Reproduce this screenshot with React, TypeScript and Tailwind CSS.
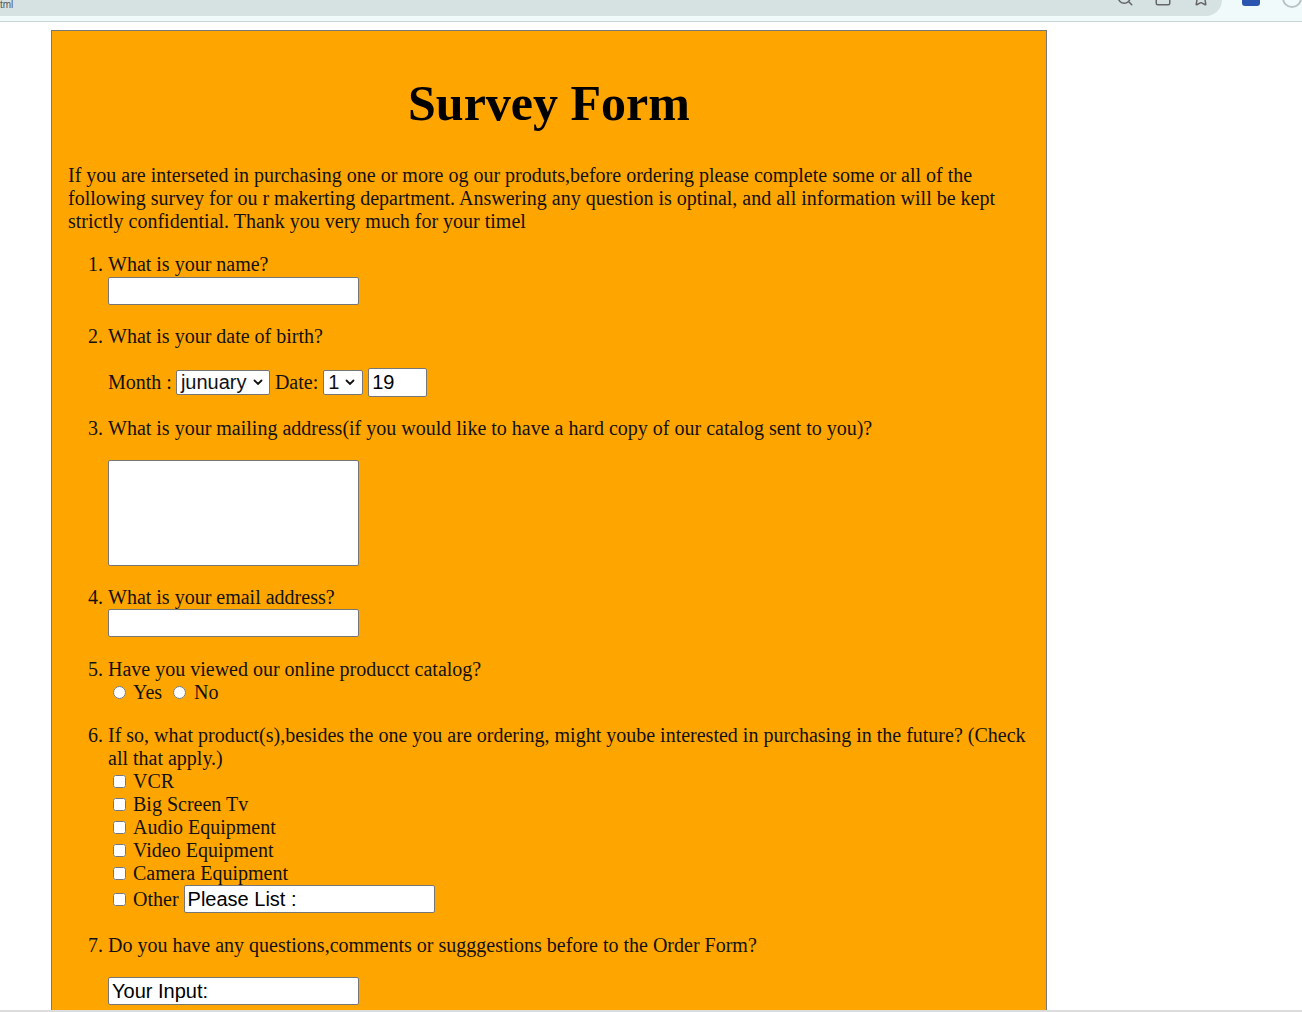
import { Search, Star, SquareArrowOutUpRight } from 'lucide-react';

const serif = { fontFamily: '"Liberation Serif", "Times New Roman", serif' };

const Chevron = () => (
  <svg width="10" height="7" viewBox="0 0 10 7" className="ml-[6px] shrink-0">
    <path d="M1.5 1.5 L5 5 L8.5 1.5" fill="none" stroke="#111" strokeWidth="1.8" strokeLinecap="round" />
  </svg>
);

const TextBox = ({ value = '', className = '' }: { value?: string; className?: string }) => (
  <input
    type="text"
    defaultValue={value}
    className={`block h-[28px] border border-[#767676] rounded-[2px] bg-white px-[3px] text-[20px] text-black font-['Liberation_Sans',Arial,sans-serif] ${className}`}
  />
);

const Check = ({ label }: { label: string }) => (
  <label className="flex items-center h-[23px]">
    <input type="checkbox" className="ml-[5px] mr-[7px] w-[13px] h-[13px]" />
    {label}
  </label>
);

const BrowserBar = () => (
  <div className="h-[22px] bg-[#f1fafb] border-b border-[#c6d4d6] overflow-hidden relative shrink-0">
    <div className="h-[16px] w-[1222px] bg-[#d6e2e2] rounded-br-[16px] flex items-start">
      <span className="text-[10px] text-[#555] leading-[10px] font-['Liberation_Sans',Arial,sans-serif]">tml</span>
      <div className="flex-1" />
      <div className="flex items-start gap-[20px] mr-[12px] -mt-[11px] text-[#666]">
        <Search size={18} strokeWidth={2} />
        <SquareArrowOutUpRight size={18} strokeWidth={2} />
        <Star size={18} strokeWidth={2} />
      </div>
    </div>
    <div className="absolute left-[1242px] -top-[12px] w-[18px] h-[18px] rounded-[3px] bg-[#2c55b0]" />
    <div className="absolute left-[1282px] -top-[12px] w-[20px] h-[20px] rounded-full border-2 border-[#b9c3c5]" />
  </div>
);

export default function App() {
  return (
    <div className="h-[1012px] w-[1302px] overflow-hidden flex flex-col bg-white">
      <BrowserBar />
      <div className="flex-1 overflow-hidden pl-[51px] pt-[8px]">
        <div className="w-[996px] border border-[#777] bg-[#ffa500] px-4 pt-[43px] pb-10 text-[20px] leading-[23px] text-[#111]" style={serif}>
          <h1 className="text-[50px] leading-[58px] font-bold text-center text-black">Survey Form</h1>
          <p className="mt-[32px]">
            If you are interseted in purchasing one or more og our produts,before ordering please complete some or all of the following survey for ou r makerting department. Answering any question is optinal, and all information will be kept strictly confidential. Thank you very much for your timel
          </p>
          <ol className="mt-[20px] list-decimal pl-[40px]">
            <li>
              What is your name?
              <TextBox className="mt-px w-[251px]" />
            </li>
            <li className="mt-[20px]">
              What is your date of birth?
              <div className="mt-[20px] h-[29px] flex items-center whitespace-pre">
                <span>Month :</span>
                <span className="ml-[4px] h-[25px] w-[94px] inline-flex items-center border border-[#767676] rounded-[2px] bg-white pl-[4px] text-[20px] font-['Liberation_Sans',Arial,sans-serif]">
                  junuary
                  <Chevron />
                </span>
                <span className="ml-[5px] mr-[5px]">Date:</span>
                <span className="h-[25px] w-[40px] inline-flex items-center border border-[#767676] rounded-[2px] bg-white pl-[4px] text-[20px] font-['Liberation_Sans',Arial,sans-serif]">
                  1
                  <Chevron />
                </span>
                <TextBox value="19" className="ml-[5px] h-[29px] w-[59px]" />
              </div>
            </li>
            <li className="mt-[20px]">
              What is your mailing address(if you would like to have a hard copy of our catalog sent to you)?
              <textarea className="block mt-[20px] w-[251px] h-[106px] border border-[#767676] rounded-[2px] bg-white resize-none" />
            </li>
            <li className="mt-[20px]">
              What is your email address?
              <TextBox className="w-[251px]" />
            </li>
            <li className="mt-[21px]">
              Have you viewed our online producct catalog?
              <div className="flex items-center h-[23px]">
                <input type="radio" name="viewed" className="ml-[5px] mr-[7px] w-[13px] h-[13px]" />
                <span>Yes</span>
                <input type="radio" name="viewed" className="ml-[11px] mr-[8px] w-[13px] h-[13px]" />
                <span>No</span>
              </div>
            </li>
            <li className="mt-[20px]">
              <span className="whitespace-nowrap">
                If so, what product(s),besides the one you are ordering, might yoube interested in purchasing in the future? (Check
              </span>
              <br />
              all that apply.)
              <Check label="VCR" />
              <Check label="Big Screen Tv" />
              <Check label="Audio Equipment" />
              <Check label="Video Equipment" />
              <Check label="Camera Equipment" />
              <div className="flex items-center h-[28px] whitespace-pre">
                <input type="checkbox" className="ml-[5px] mr-[7px] w-[13px] h-[13px]" />
                <span>Other </span>
                <TextBox value="Please List :" className="w-[251px]" />
              </div>
            </li>
            <li className="mt-[21px]">
              Do you have any questions,comments or sugggestions before to the Order Form?
              <TextBox value="Your Input:" className="mt-[20px] w-[251px]" />
            </li>
          </ol>
        </div>
      </div>
      <div className="h-[2px] bg-[#dcdcdc] shrink-0" />
    </div>
  );
}
